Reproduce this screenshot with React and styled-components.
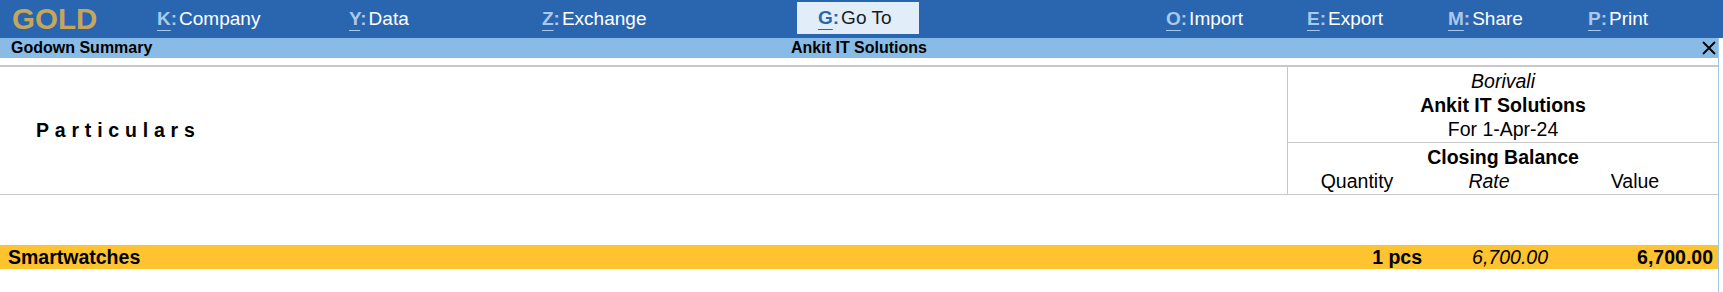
import React from 'react';
import styled, { createGlobalStyle } from 'styled-components';

const menu = [
  { k: 'K', label: 'Company', w: 192 },
  { k: 'Y', label: 'Data', w: 193 },
  { k: 'Z', label: 'Exchange', w: 276 },
  { k: 'G', label: 'Go To', w: 122, active: true, after: 226 },
  { k: 'O', label: 'Import', w: 141 },
  { k: 'E', label: 'Export', w: 141 },
  { k: 'M', label: 'Share', w: 140 },
  { k: 'P', label: 'Print', w: 120 },
];

const App = () => {
  return (
    <>
      <GlobalStyle />
      <Page>
        <TopBar>
          <Logo>GOLD</Logo>
          {menu.map(m => (
            <MenuItem key={m.k} $w={m.w} $active={m.active} $after={m.after}>
              <Key $active={m.active}>
                <u>{m.k}</u>:
              </Key>
              {m.label}
            </MenuItem>
          ))}
        </TopBar>
        <Panel>
          <TitleBar>
            <TitleLeft>Godown Summary</TitleLeft>
            <TitleCenter>Ankit IT Solutions</TitleCenter>
            <TitleRight>
              <svg width="14" height="14" viewBox="0 0 14 14">
                <path d="M1 1 L13 13 M13 1 L1 13" stroke="#000" strokeWidth="1.8" />
              </svg>
            </TitleRight>
          </TitleBar>
          <Report>
            <Header>
              <ParticularsCell>Particulars</ParticularsCell>
              <RightHead>
                <HeadTop>
                  <HeadLine $italic>Borivali</HeadLine>
                  <HeadLine $bold>Ankit IT Solutions</HeadLine>
                  <HeadLine>For 1-Apr-24</HeadLine>
                </HeadTop>
                <HeadBottom>
                  <HeadLine $bold>Closing Balance</HeadLine>
                  <SubCols>
                    <SubCol>Quantity</SubCol>
                    <SubCol $italic>Rate</SubCol>
                    <SubCol>Value</SubCol>
                  </SubCols>
                </HeadBottom>
              </RightHead>
            </Header>
            <Spacer />
            <Row $selected>
              <NameCell>Smartwatches</NameCell>
              <NumCell $bold>1 pcs</NumCell>
              <NumCell $italic>6,700.00</NumCell>
              <NumCell $bold>6,700.00</NumCell>
            </Row>
          </Report>
        </Panel>
      </Page>
    </>
  );
};

export default App;

//style
const GlobalStyle = createGlobalStyle`
  body {
    margin: 0;
    background: #fff;
    font-family: "Liberation Sans", Arial, sans-serif;
    color: #000;
  }
`;
const Page = styled.div`
  width: 1723px;
  height: 292px;
  overflow: hidden;
  background: #fff;
`;
const TopBar = styled.div`
  height: 38px;
  background: #2a66b0;
  display: flex;
  align-items: center;
`;
const Logo = styled.div`
  width: 124px;
  padding-left: 12px;
  font-size: 29.5px;
  font-weight: bold;
  color: #c6a65a;
  line-height: 38px;
`;
const MenuItem = styled.div`
  box-sizing: border-box;
  width: ${p => p.$w}px;
  margin-right: ${p => p.$after || 0}px;
  padding-left: 21px;
  height: ${p => (p.$active ? '32px' : '38px')};
  align-self: ${p => (p.$active ? 'flex-start' : 'center')};
  margin-top: ${p => (p.$active ? '2px' : '0')};
  display: flex;
  align-items: center;
  font-size: 19px;
  color: ${p => (p.$active ? '#1a1a1a' : '#fff')};
  background: ${p => (p.$active ? '#e1eefa' : 'transparent')};
  white-space: nowrap;
`;
const Key = styled.span`
  color: ${p => (p.$active ? '#2a66b0' : '#a9c9ec')};
  font-weight: bold;
  margin-right: 2px;
  u {
    text-decoration: underline;
    text-decoration-thickness: 1px;
    text-underline-offset: 5px;
  }
`;
const Panel = styled.div`
  width: 1718px;
  border-right: 1px solid #a3c6e8;
  height: 254px;
`;
const TitleBar = styled.div`
  height: 20px;
  background: #88bce6;
  display: grid;
  grid-template-columns: 1fr auto 1fr;
  align-items: center;
  font-size: 16px;
  font-weight: bold;
`;
const TitleLeft = styled.div`
  padding-left: 11px;
`;
const TitleCenter = styled.div``;
const TitleRight = styled.div`
  display: flex;
  justify-content: flex-end;
  padding-right: 2px;
`;
const Report = styled.div`
  padding-top: 7px;
`;
const Header = styled.div`
  display: flex;
  border-top: 2px solid #c8c8c8;
  border-bottom: 1px solid #c8c8c8;
  font-size: 19.5px;
`;
const ParticularsCell = styled.div`
  width: 1288px;
  box-sizing: border-box;
  border-right: 1px solid #c8c8c8;
  padding-left: 36px;
  display: flex;
  align-items: center;
  font-size: 19.5px;
  font-weight: bold;
  letter-spacing: 5.8px;
`;
const RightHead = styled.div`
  flex: 1;
`;
const HeadTop = styled.div`
  padding: 2px 0 1px;
  border-bottom: 1px solid #c8c8c8;
`;
const HeadBottom = styled.div`
  padding: 2px 0 1px;
`;
const HeadLine = styled.div`
  text-align: center;
  line-height: 24px;
  font-weight: ${p => (p.$bold ? 'bold' : 'normal')};
  font-style: ${p => (p.$italic ? 'italic' : 'normal')};
`;
const SubCols = styled.div`
  display: grid;
  grid-template-columns: 138px 126px 1fr;
  line-height: 24px;
`;
const SubCol = styled.div`
  text-align: center;
  font-style: ${p => (p.$italic ? 'italic' : 'normal')};
`;
const Spacer = styled.div`
  height: 50px;
`;
const Row = styled.div`
  display: grid;
  grid-template-columns: 1289px 138px 126px 1fr;
  height: 24px;
  align-items: center;
  background: ${p => (p.$selected ? '#fec32f' : 'transparent')};
  font-size: 19.5px;
`;
const NameCell = styled.div`
  padding-left: 8px;
  font-weight: bold;
`;
const NumCell = styled.div`
  text-align: right;
  padding-right: 5px;
  font-weight: ${p => (p.$bold ? 'bold' : 'normal')};
  font-style: ${p => (p.$italic ? 'italic' : 'normal')};
`;
